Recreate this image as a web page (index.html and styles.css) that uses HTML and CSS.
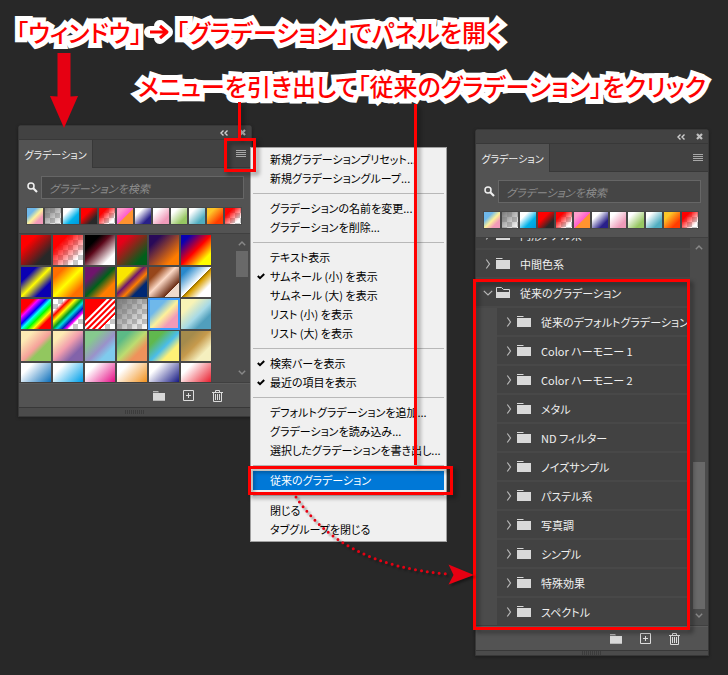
FILE: index.html
```html
<!DOCTYPE html>
<html lang="ja">
<head>
    <meta charset="UTF-8">
    <meta name="viewport" content="width=device-width, initial-scale=1.0">
    <title>従来のグラデーション</title>
    <link rel="stylesheet" href="styles.css">
</head>
<body>
    <svg class="sprite" aria-hidden="true">
        <symbol id="i-collapse" viewBox="0 0 8 6"><path d="M3.5 .5 1 3l2.500 2.500M7.500 .5 5 3l2.500 2.500" fill="none" stroke="#d0d0d0" stroke-width="1.400"/></symbol>
        <symbol id="i-close" viewBox="0 0 7 7"><path d="M1 1l5 5M6 1 1 6" fill="none" stroke="#c0c0c0" stroke-width="2.200"/></symbol>
        <symbol id="i-menu" viewBox="0 0 10 8"><path d="M0 .5h10M0 2.500h10M0 4.500h10M0 6.500h10" stroke="#a8a8a8" fill="none"/></symbol>
        <symbol id="i-search" viewBox="0 0 11 11"><circle cx="4" cy="4" r="3" fill="none" stroke="#f0f0f0" stroke-width="1.500"/><path d="M6 6l4 4" stroke="#f0f0f0" stroke-width="2.200"/></symbol>
        <symbol id="i-folder" viewBox="0 0 14 11"><path d="M0 0h6l1 1H0zM0 2h14v9H0z" fill="#d8d8d8"/></symbol>
        <symbol id="i-folder-open" viewBox="0 0 14 11"><path d="M.5 10V.5h5l2 2h6V10" fill="none" stroke="#d8d8d8"/><path d="M0 5h14v6H0z" fill="#d8d8d8"/></symbol>
        <symbol id="i-right" viewBox="0 0 5 10"><path d="M.8 .5 4 5 .8 9.500" fill="none" stroke="#b8b8b8" stroke-width="1.200"/></symbol>
        <symbol id="i-down" viewBox="0 0 10 6"><path d="M.8 .8 5 5 9.200 .8" fill="none" stroke="#b8b8b8" stroke-width="1.200"/></symbol>
        <symbol id="i-up" viewBox="0 0 8 5"><path d="M.8 4.200 4 1l3.200 3.200" fill="none" stroke="#888" stroke-width="1.400"/></symbol>
        <symbol id="i-dn" viewBox="0 0 8 5"><path d="M.8 .8 4 4 7.200 .8" fill="none" stroke="#888" stroke-width="1.400"/></symbol>
        <symbol id="i-new" viewBox="0 0 11 11"><path d="M.5 .5h10v10H.5zM5.500 3v5M3 5.500h5" fill="none" stroke="#dcdcdc"/></symbol>
        <symbol id="i-trash" viewBox="0 0 11 12"><path d="M0 2.500h11M3.500 2V.5h4V2M1.500 3v8.500h8V3M3.500 4v6M5.500 4v6M7.500 4v6" fill="none" stroke="#dcdcdc"/></symbol>
        <symbol id="i-check" viewBox="0 0 8 7"><path d="M.8 3 3 5.200 7.200 1" fill="none" stroke="#000" stroke-width="2"/></symbol>
    </svg>

    <header class="notes">
        <h1 class="note">「ウィンドウ」<svg class="note-arrow" viewBox="0 0 20 18" aria-label="→"><path d="M1 9h16M11 3l7 6-7 6" class="halo"/><path d="M1 9h16M11 3l7 6-7 6" class="ink"/></svg>「グラデーション」でパネルを開く</h1>
        <p class="note note-second">メニューを引き出して「従来のグラデーション」をクリック</p>
    </header>

    <main class="workspace">
        <section class="panel">
            <div class="panel-bar">
                <button type="button" aria-label="折りたたむ"><svg width="8" height="6"><use href="#i-collapse"/></svg></button>
                <button type="button" aria-label="閉じる"><svg width="7" height="7"><use href="#i-close"/></svg></button>
            </div>
            <div class="tabs">
                <button type="button" class="tab">グラデーション</button>
                <button type="button" class="menu-button" aria-label="メニュー"><svg width="10" height="8"><use href="#i-menu"/></svg></button>
            </div>
            <div class="search">
                <label for="search-left" aria-label="検索"><svg width="11" height="11"><use href="#i-search"/></svg></label>
                <input type="text" id="search-left" placeholder="グラデーションを検索">
            </div>
            <div class="recent"></div>
            <div class="presets">
                <div class="grid"></div>
                <div class="scrollbar">
                    <svg width="8" height="5"><use href="#i-up"/></svg>
                    <span class="thumb"></span>
                    <svg width="8" height="5"><use href="#i-dn"/></svg>
                </div>
            </div>
            <div class="panel-footer">
                <button type="button" aria-label="新規グループ"><svg width="12" height="10"><use href="#i-folder"/></svg></button>
                <button type="button" aria-label="新規"><svg width="11" height="11"><use href="#i-new"/></svg></button>
                <button type="button" aria-label="削除"><svg width="11" height="12"><use href="#i-trash"/></svg></button>
            </div>
            <div class="grip"></div>

            <div class="menu" role="menu">
                <button type="button" role="menuitem">新規グラデーションプリセット...</button>
                <button type="button" role="menuitem">新規グラデーショングループ...</button>
                <hr>
                <button type="button" role="menuitem">グラデーションの名前を変更...</button>
                <button type="button" role="menuitem">グラデーションを削除...</button>
                <hr>
                <button type="button" role="menuitem">テキスト表示</button>
                <button type="button" role="menuitem"><svg class="check"><use href="#i-check"/></svg>サムネール (小) を表示</button>
                <button type="button" role="menuitem">サムネール (大) を表示</button>
                <button type="button" role="menuitem">リスト (小) を表示</button>
                <button type="button" role="menuitem">リスト (大) を表示</button>
                <hr>
                <button type="button" role="menuitem"><svg class="check"><use href="#i-check"/></svg>検索バーを表示</button>
                <button type="button" role="menuitem"><svg class="check"><use href="#i-check"/></svg>最近の項目を表示</button>
                <hr>
                <button type="button" role="menuitem">デフォルトグラデーションを追加...</button>
                <button type="button" role="menuitem">グラデーションを読み込み...</button>
                <button type="button" role="menuitem">選択したグラデーションを書き出し...</button>
                <hr>
                <button type="button" role="menuitem" class="active">従来のグラデーション</button>
                <hr>
                <button type="button" role="menuitem">閉じる</button>
                <button type="button" role="menuitem">タブグループを閉じる</button>
            </div>
        </section>

        <section class="panel panel-tall">
            <div class="panel-bar">
                <button type="button" aria-label="折りたたむ"><svg width="8" height="6"><use href="#i-collapse"/></svg></button>
                <button type="button" aria-label="閉じる"><svg width="7" height="7"><use href="#i-close"/></svg></button>
            </div>
            <div class="tabs">
                <button type="button" class="tab">グラデーション</button>
                <button type="button" class="menu-button" aria-label="メニュー"><svg width="10" height="8"><use href="#i-menu"/></svg></button>
            </div>
            <div class="search">
                <label for="search-right" aria-label="検索"><svg width="11" height="11"><use href="#i-search"/></svg></label>
                <input type="text" id="search-right" placeholder="グラデーションを検索">
            </div>
            <div class="recent"></div>
            <div class="presets">
                <ul class="tree">
                    <li class="row"><svg class="arrow"><use href="#i-right"/></svg><svg class="folder"><use href="#i-folder"/></svg>円形ノアル系</li>
                    <li class="row"><svg class="arrow"><use href="#i-right"/></svg><svg class="folder"><use href="#i-folder"/></svg>中間色系</li>
                    <li class="row"><svg class="arrow"><use href="#i-down"/></svg><svg class="folder"><use href="#i-folder-open"/></svg>従来のグラデーション</li>
                    <li>
                        <ul class="children">
                            <li class="row"><svg class="arrow"><use href="#i-right"/></svg><svg class="folder"><use href="#i-folder"/></svg>従来のデフォルトグラデーション</li>
                            <li class="row"><svg class="arrow"><use href="#i-right"/></svg><svg class="folder"><use href="#i-folder"/></svg>Color ハーモニー 1</li>
                            <li class="row"><svg class="arrow"><use href="#i-right"/></svg><svg class="folder"><use href="#i-folder"/></svg>Color ハーモニー 2</li>
                            <li class="row"><svg class="arrow"><use href="#i-right"/></svg><svg class="folder"><use href="#i-folder"/></svg>メタル</li>
                            <li class="row"><svg class="arrow"><use href="#i-right"/></svg><svg class="folder"><use href="#i-folder"/></svg>ND フィルター</li>
                            <li class="row"><svg class="arrow"><use href="#i-right"/></svg><svg class="folder"><use href="#i-folder"/></svg>ノイズサンプル</li>
                            <li class="row"><svg class="arrow"><use href="#i-right"/></svg><svg class="folder"><use href="#i-folder"/></svg>パステル系</li>
                            <li class="row"><svg class="arrow"><use href="#i-right"/></svg><svg class="folder"><use href="#i-folder"/></svg>写真調</li>
                            <li class="row"><svg class="arrow"><use href="#i-right"/></svg><svg class="folder"><use href="#i-folder"/></svg>シンプル</li>
                            <li class="row"><svg class="arrow"><use href="#i-right"/></svg><svg class="folder"><use href="#i-folder"/></svg>特殊効果</li>
                            <li class="row"><svg class="arrow"><use href="#i-right"/></svg><svg class="folder"><use href="#i-folder"/></svg>スペクトル</li>
                        </ul>
                    </li>
                </ul>
                <div class="scrollbar">
                    <svg width="8" height="5"><use href="#i-up"/></svg>
                    <span class="thumb"></span>
                    <svg width="8" height="5"><use href="#i-dn"/></svg>
                </div>
            </div>
            <div class="panel-footer">
                <button type="button" aria-label="新規グループ"><svg width="12" height="10"><use href="#i-folder"/></svg></button>
                <button type="button" aria-label="新規"><svg width="11" height="11"><use href="#i-new"/></svg></button>
                <button type="button" aria-label="削除"><svg width="11" height="12"><use href="#i-trash"/></svg></button>
            </div>
            <div class="grip"></div>
        </section>
    </main>

    <!-- callouts drawn over the panels -->
    <svg class="callouts" width="728" height="675" viewBox="0 0 728 675" aria-hidden="true">
        <path d="M57.500 53h13v43.500l7.500-.5-14 32-14-32 7.500 .5z" fill="#e60012"/>
        <g class="lines">
            <path d="M239.500 102v37M415.500 104v361"/>
            <rect x="225.500" y="139.500" width="29" height="31"/>
            <rect x="249.500" y="467.500" width="202" height="26"/>
            <rect x="474.500" y="280.500" width="214" height="348"/>
        </g>
        <g class="pointer">
            <path d="M296 497C325 540 372 568 448 574" class="dots"/>
            <path d="M448.500 564.500 474 575l-25.500 9.500 5-9.500z" fill="#e60012"/>
        </g>
    </svg>
    <script src="swatches.js"></script>
</body>
</html>
```
FILE: swatches.js
```js
const clear = 'repeating-conic-gradient(#c8c8c8 0 25%, #fff 0 50%) 0 0 / 10px 10px';
const g = (...stops) => `linear-gradient(135deg, ${stops.join(', ')})`;

const classic = g('#6fb8ea 28%', '#fdf19a 52%', '#f29ab8 75%');
const fadeGray = g('#777', 'transparent') + ', ' + clear;
const fadeRed = g('#f00 25%', 'rgba(255, 0, 0, 0) 80%') + ', ' + clear;

const recent = [
    classic,
    fadeGray,
    g('#fff 25%', '#00b2ea 65%', '#0097dc'),
    g('#f00 35%', '#282828 75%'),
    fadeRed,
    g('#ff9dcc 20%', '#ff5fd0 50%', '#ff9330 55%'),
    g('#fff 25%', '#29208a 75%'),
    g('#fff 20%', '#ef9bba 75%'),
    g('#fff 20%', '#97c763 75%'),
    g('#fff 20%', '#4fadc0 75%'),
    g('#fdc628 25%', '#ff3c00 75%'),
    fadeRed
];

const presets = [
    g('#f00 25%', '#282828 75%'),
    fadeRed,
    g('#000 25%', '#5b0719 42%', '#fff 80%'),
    g('#e60019 20%', '#00601b 80%'),
    g('#290a59 20%', '#ff7c00 80%'),
    g('#0a00b2 15%', '#f00 50%', '#fffc00 80%'),
    g('#0a00b2 25%', '#fffc00 50%', '#0a00b2 75%'),
    g('#ff6e00 20%', '#ffff00 50%', '#ff6e00 80%'),
    g('#6f156c 25%', '#00601b 50%', '#fd7c00 75%'),
    g('#f9e600 30%', '#6f156c 45%', '#fd7c00 60%', '#002874 75%'),
    g('#97461a 22%', '#fbd8c5 45%', '#6c2e16 75%', '#efdbcd 76%'),
    g('#2989cc 15%', '#fff 50%', '#906a00 51%', '#d99f00 56%', '#fff 78%'),
    g('#f00 22%', '#f0f 30%', '#00f 42%', '#0ff 50%', '#0f0 60%', '#ff0 70%', '#f00 80%'),
    g('transparent 20%', '#f00 28%', '#ff0 38%', '#009a20 49%', '#00e0e0 56%', '#0020c0 65%', '#f0f 72%', 'transparent 76%') + ', ' + clear,
    'linear-gradient(135deg, #f00 36%, #fff 37% 41%, #f00 42% 46%, #fff 47% 51%, #f00 52% 56%, #fff 57% 61%, #f00 62% 66%, #fff 67% 71%, #f00 72% 75%, transparent 76%), ' + clear,
    fadeGray,
    classic,
    g('#f8f3b6 25%', '#a6d9e6 55%', '#519fbd 75%'),
    g('#fdebb4 20%', '#f5a19a 52%', '#92c75f 65%'),
    g('#fdebb4 20%', '#f29eae 48%', '#8263aa 75%'),
    g('#86c98e 25%', '#9a92ca 55%', '#7fcbed 75%'),
    g('#5cba86 22%', '#bddc70 50%', '#ef925b 72%'),
    g('#60b84e 25%', '#4bbdea 52%', '#fff176 72%'),
    g('#a58b4c 25%', '#c69a4c 47%', '#f5efbf 75%'),
    g('#fff 20%', '#0068b7 85%'),
    g('#fff 20%', '#00a0e9 80%'),
    g('#fff 20%', '#e4007f 85%'),
    g('#fff 20%', '#f08300 90%'),
    g('#fff 20%', '#1d2088 80%'),
    g('#fff 20%', '#e60012 90%')
];

function fill(box, list) {
    list.forEach((background) => {
        const item = document.createElement('span');
        item.className = 'swatch';
        item.style.background = background;
        box.append(item);
    });
}

document.querySelectorAll('.recent').forEach((box) => fill(box, recent));
const grid = document.querySelector('.grid');
fill(grid, presets);
grid.children[16].classList.add('selected');
```
FILE: styles.css
```css
* {
    box-sizing: border-box;
}
body {
    position: relative;
    min-height: 675px;
    margin: 0;
    background: #282828;
    color: #f0f0f0;
    font-family: "Noto Sans CJK JP", sans-serif;
    font-size: 11px;
    font-feature-settings: "palt";
    overflow-x: hidden;
}
button, input {
    font: inherit;
    font-feature-settings: inherit;
    color: inherit;
}
button {
    padding: 0;
    border: 0;
    background: none;
}
svg {
    display: block;
    flex: none;
}
ul {
    margin: 0;
    padding: 0;
    list-style: none;
}
.sprite {
    position: absolute;
    width: 0;
    height: 0;
}

/* notes */
.notes {
    height: 125px;
    padding: 14px 22px 0 16px;
}
.note {
    display: flex;
    align-items: center;
    margin: 0;
    color: #f00;
    font-size: 24px;
    font-weight: 500;
    line-height: 36px;
    white-space: nowrap;
    -webkit-text-stroke: 10px #fff;
    paint-order: stroke fill;
    stroke-linejoin: round;
}
.note-second {
    justify-content: flex-end;
    margin-top: 18px;
}
.note-arrow {
    width: 20px;
    height: 18px;
    margin: 0 7px;
    overflow: visible;
}
.note-arrow path {
    fill: none;
    stroke-linejoin: round;
}
.note-arrow .halo {
    stroke: #fff;
    stroke-width: 12;
    stroke-linecap: round;
}
.note-arrow .ink {
    stroke: #f00;
    stroke-width: 3;
}

/* panels */
.workspace {
    display: flex;
    justify-content: space-between;
    align-items: flex-start;
    padding: 0 19px 0 18px;
}
.panel {
    position: relative;
    width: 234px;
    border: 1px solid #383838;
    border-radius: 3px 3px 0 0;
    background: #535353;
    box-shadow: 0 1px 3px #1c1c1c;
}
.panel-tall {
    margin-top: 4px;
}
.panel-bar {
    display: flex;
    justify-content: flex-end;
    align-items: center;
    gap: 11px;
    height: 13px;
    padding-right: 5px;
    background: #424242;
}
.tabs {
    display: flex;
    justify-content: space-between;
    height: 29px;
    padding-right: 5px;
    border-top: 1px solid #383838;
    border-bottom: 1px solid #383838;
    background: #424242;
}
.tab {
    width: 74px;
    height: 28px;
    border-right: 1px solid #383838;
    background: #535353;
    font-size: 10px;
}
.search {
    display: flex;
    align-items: center;
    gap: 3px;
    padding: 8px 7px 8px 8px;
}
.search input {
    flex: 1;
    min-width: 0;
    height: 23px;
    padding: 0 7px;
    border: 1px solid #666;
    background: #454545;
    font-style: italic;
}
.search input::placeholder {
    color: #8c8c8c;
}
.recent {
    display: flex;
    height: 26px;
    padding: 0 7px;
}
.recent .swatch {
    width: 18px;
    height: 18px;
    border: 1px solid #484848;
}
.recent .swatch, .grid .swatch {
    background-clip: padding-box !important;
}
.presets {
    display: flex;
    height: 150px;
    border-top: 1px solid #404040;
    border-bottom: 1px solid #404040;
    background: #4b4b4b;
    overflow: hidden;
}
.grid {
    display: grid;
    grid-template-columns: repeat(6, 32px);
    grid-auto-rows: 32px;
    padding-left: 1px;
}
.grid .swatch {
    border: 1px solid #484848;
}
.grid .selected {
    border: 2px solid #3d9cff;
}
.scrollbar {
    display: flex;
    flex: none;
    flex-direction: column;
    align-items: center;
    width: 18px;
    margin-left: auto;
    padding: 7px 0;
}
.scrollbar svg:last-child {
    margin-top: auto;
}
.thumb {
    width: 12px;
    height: 26px;
    margin-top: 5px;
    background: #696969;
}
.panel-footer {
    display: flex;
    justify-content: flex-end;
    align-items: center;
    gap: 18px;
    height: 25px;
    padding-right: 28px;
    border-top: 1px solid #5c5c5c;
    border-bottom: 1px solid #383838;
}
.grip {
    height: 8px;
    background: repeating-linear-gradient(90deg, #3c3c3c 0 1px, transparent 1px 2px) center / 20px 4px no-repeat #4b4b4b;
}

/* folder tree */
.panel-tall .presets {
    height: 389px;
}
.panel-tall .thumb {
    height: 147px;
    margin-top: auto;
}
.panel-tall .scrollbar svg:last-child {
    margin-top: 4px;
}
.panel-tall .grip {
    height: 4px;
}
.tree {
    flex: 1;
    min-width: 0;
    margin-top: -17px;
}
.row {
    display: flex;
    align-items: center;
    height: 29px;
    padding-left: 7px;
    border-bottom: 2px solid #484848;
    background: #424242;
    white-space: nowrap;
}
.children {
    padding-left: 21px;
}
.arrow {
    width: 10px;
    height: 10px;
    margin-right: 3px;
}
.folder {
    width: 14px;
    height: 11px;
    margin-right: 10px;
}

/* flyout menu */
.menu {
    position: absolute;
    top: 21px;
    left: 231px;
    width: 197px;
    padding: 2px;
    border: 1px solid #a0a0a0;
    background: #f0f0f0;
    color: #000;
}
.menu button {
    display: block;
    position: relative;
    width: 100%;
    height: 19px;
    padding-left: 17px;
    line-height: 19px;
    text-align: left;
    white-space: nowrap;
}
.menu hr {
    height: 1px;
    margin: 5px 0;
    border: 0;
    background: #b8b8b8;
}
.menu .active {
    background: #0078d7;
    color: #fff;
}
.check {
    position: absolute;
    top: 6px;
    left: 4px;
    width: 8px;
    height: 7px;
}

/* callouts */
.callouts {
    position: absolute;
    top: 0;
    left: 0;
    pointer-events: none;
}
.lines {
    fill: none;
    stroke: #f00;
    stroke-width: 3;
    filter: drop-shadow(3px 3px 2px rgba(0, 0, 0, 0.4));
}
.pointer {
    filter: drop-shadow(2px 2px 1px rgba(0, 0, 0, 0.4));
}
.dots {
    fill: none;
    stroke: #e60012;
    stroke-width: 3;
    stroke-linecap: round;
    stroke-dasharray: 0 6;
}
```
